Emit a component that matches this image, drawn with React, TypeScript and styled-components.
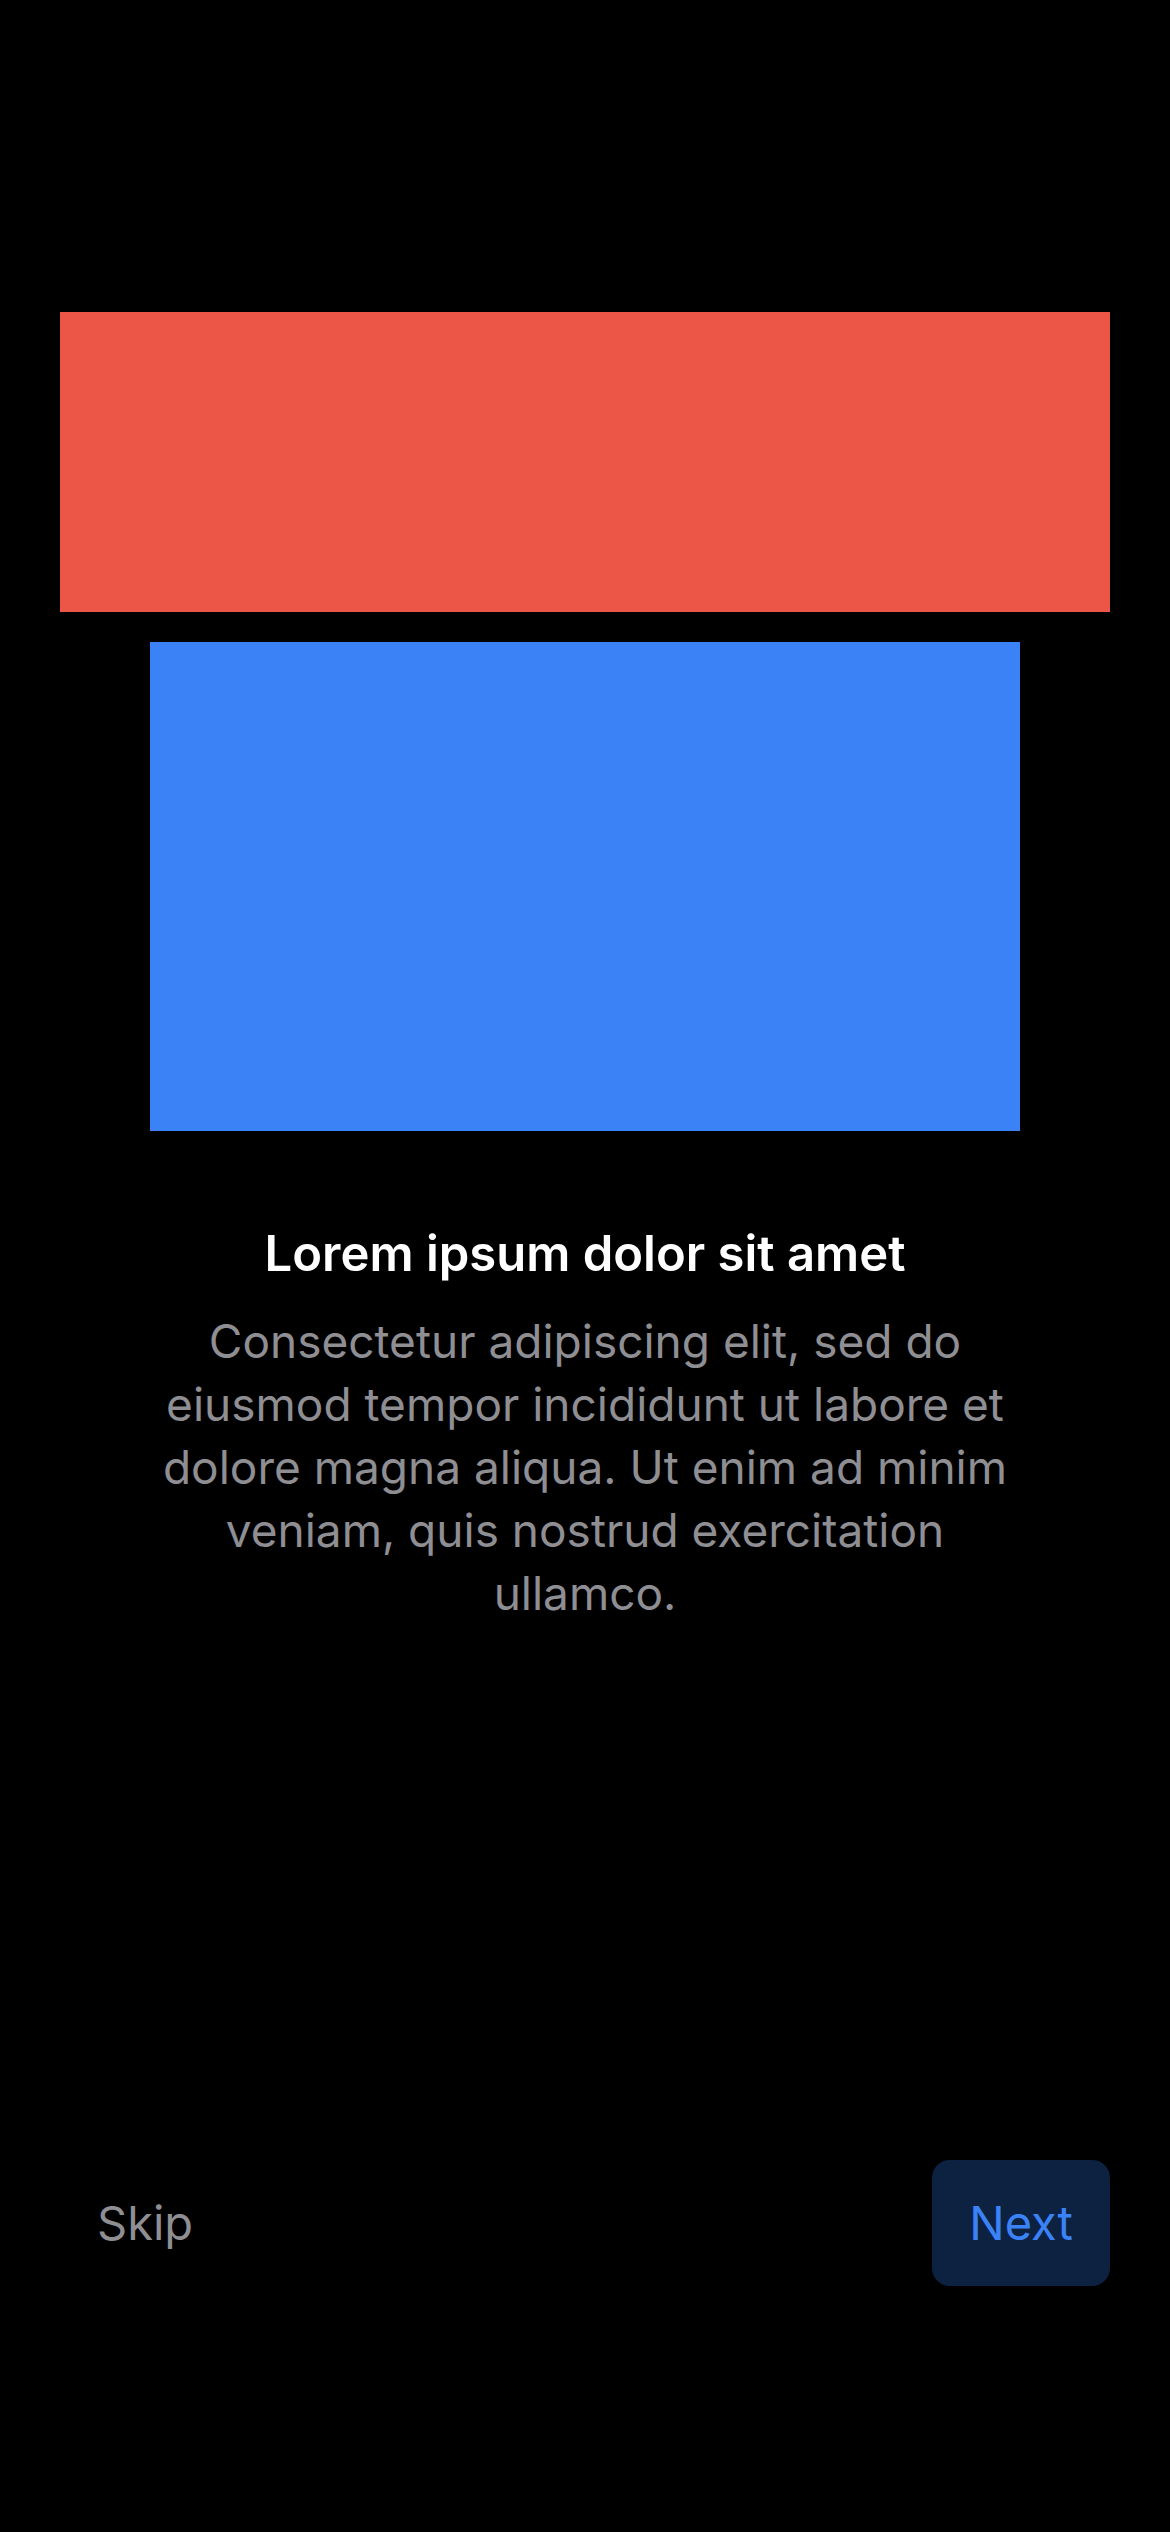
import React from "react";
import styled, { createGlobalStyle } from "styled-components";

const Global = createGlobalStyle`
  html, body { margin: 0; padding: 0; background: #000; }
  body { font-family: Inter, "Noto Sans", sans-serif; -webkit-font-smoothing: antialiased; }
  * { box-sizing: border-box; }
`;

const Page = styled.div`
  min-height: 100vh;
  width: 1170px;
  background: #000;
  display: flex;
  flex-direction: column;
`;

const Hero = styled.div`
  padding: 312px 60px 0;
  display: flex;
  flex-direction: column;
  align-items: center;
  gap: 30px;
`;

const Block = styled.div<{ $color: string; $w: string; $h: number }>`
  background: ${(p) => p.$color};
  width: ${(p) => p.$w};
  height: ${(p) => p.$h}px;
`;

const TextBlock = styled.div`
  width: 870px;
  margin: 92px auto 0;
  display: flex;
  flex-direction: column;
  align-items: center;
  gap: 26px;
  text-align: center;
`;

const Title = styled.h1`
  margin: 0;
  font-size: 49px;
  line-height: 1.25;
  font-weight: 600;
  color: #fff;
  letter-spacing: 0;
`;

const Body = styled.p`
  margin: 0;
  font-size: 46px;
  line-height: 63px;
  font-weight: 400;
  color: #8e8e93;
  letter-spacing: 0;
`;

const Spacer = styled.div`
  flex: 1;
`;

const Footer = styled.div`
  display: flex;
  justify-content: space-between;
  align-items: center;
  padding: 0 60px 246px;
`;

const Button = styled.button<{ $primary?: boolean }>`
  border: none;
  border-radius: 18px;
  padding: 33px 37px;
  font-family: Inter, "Noto Sans", sans-serif;
  font-size: 47px;
  line-height: 60px;
  font-weight: 400;
  background: ${(p) => (p.$primary ? "#0d2241" : "transparent")};
  color: ${(p) => (p.$primary ? "#3b82f6" : "#8e8e93")};
  cursor: pointer;
`;

export default function App() {
  return (
    <>
      <Global />
      <Page>
        <Hero>
          <Block $color="#ec5646" $w="100%" $h={300} />
          <Block $color="#3b82f6" $w="870px" $h={489} />
        </Hero>
        <TextBlock>
          <Title>Lorem ipsum dolor sit amet</Title>
          <Body>
            Consectetur adipiscing elit, sed do eiusmod tempor incididunt ut labore et dolore magna aliqua. Ut enim ad minim veniam, quis nostrud exercitation ullamco.
          </Body>
        </TextBlock>
        <Spacer />
        <Footer>
          <Button>Skip</Button>
          <Button $primary>Next</Button>
        </Footer>
      </Page>
    </>
  );
}
